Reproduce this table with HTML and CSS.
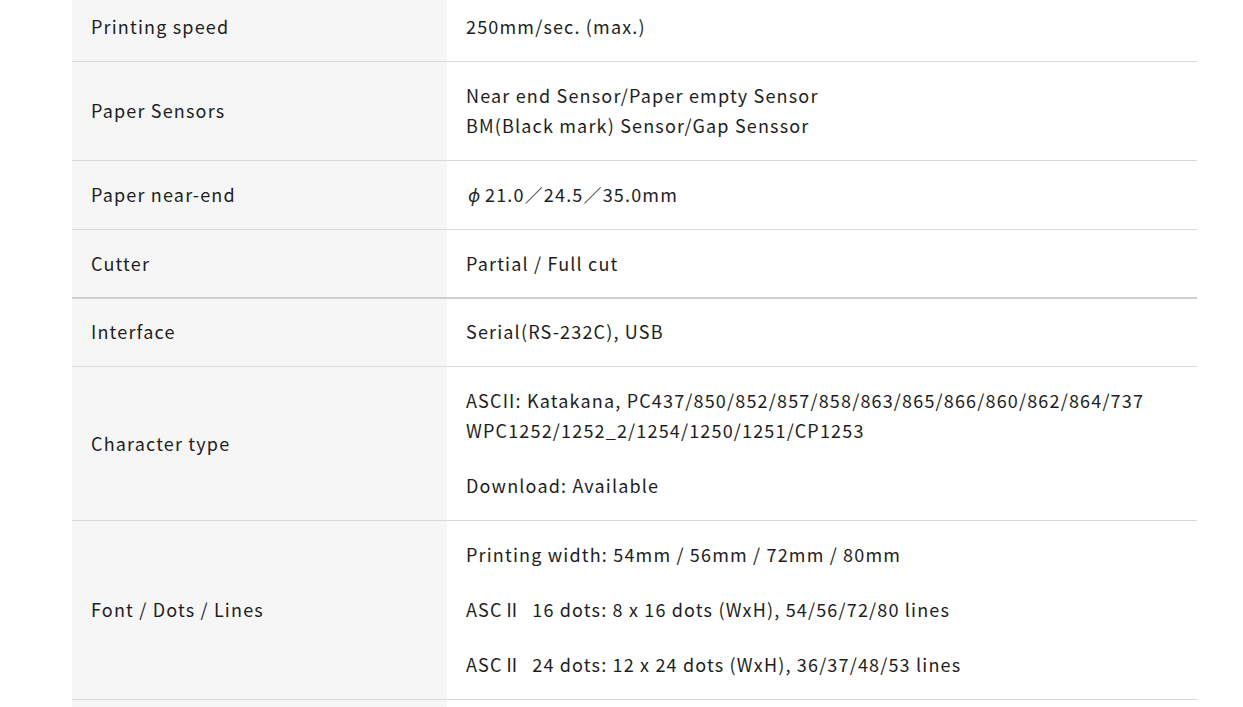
FILE: index.html
```html
<!DOCTYPE html>
<html lang="en">
<head>
<meta charset="utf-8">
<title>Specifications</title>
<link rel="stylesheet" href="styles.css">
</head>
<body>
<div class="wrap">
  <table class="spec">
    <tr><th>Printing speed</th><td>250mm/sec. (max.)</td></tr>
    <tr><th>Paper Sensors</th><td>Near end Sensor/Paper empty Sensor<br>BM(Black mark) Sensor/Gap Senssor</td></tr>
    <tr><th>Paper near-end</th><td><span class="phi">ϕ</span>21.0／24.5／35.0mm</td></tr>
    <tr class="group-end"><th>Cutter</th><td>Partial / Full cut</td></tr>
    <tr class="group-start"><th>Interface</th><td>Serial(RS-232C), USB</td></tr>
    <tr><th>Character type</th><td><p>ASCII: Katakana, PC437/850/852/857/858/863/865/866/860/862/864/737<br>WPC1252/1252_2/1254/1250/1251/CP1253</p><p>Download: Available</p></td></tr>
    <tr><th>Font / Dots / Lines</th><td><p>Printing width: 54mm / 56mm / 72mm / 80mm</p><p>ASCⅡ&nbsp; 16 dots: 8 x 16 dots (WxH), 54/56/72/80 lines</p><p>ASCⅡ&nbsp; 24 dots: 12 x 24 dots (WxH), 36/37/48/53 lines</p></td></tr>
    <tr><th>&nbsp;</th><td>&nbsp;</td></tr>
  </table>
</div>
</body>
</html>
```

FILE: styles.css
```css
html, body {
  margin: 0;
  padding: 0;
  background: #ffffff;
}
body {
  font-family: "Noto Sans CJK JP", "Noto Sans", sans-serif;
  font-size: 18px;
  color: #1e1e1e;
  overflow: hidden;
}
.wrap {
  width: 1125px;
  margin: -7px 0 0 72px;
}
.spec {
  width: 100%;
  border-collapse: collapse;
  table-layout: fixed;
}
.spec th,
.spec td {
  padding: 18px 19px 20px;
  line-height: 30px;
  text-align: left;
  font-weight: normal;
  vertical-align: middle;
  border-bottom: 1px solid #d9d9d9;
  letter-spacing: 0.065em;
}
.spec th {
  width: 337px;
  background: #f6f6f6;
}
.spec td p {
  margin: 0 0 25px;
}
.spec td p:last-child {
  margin-bottom: 0;
}
.spec .group-end th,
.spec .group-end td {
  padding-bottom: 19px;
  border-bottom: 2px solid #cfcfcf;
}
.spec .group-start th,
.spec .group-start td {
  padding-top: 17px;
}
.phi {
  display: inline-block;
  width: 17px;
  padding-left: 2px;
  font-style: italic;
  letter-spacing: 0;
}
```
